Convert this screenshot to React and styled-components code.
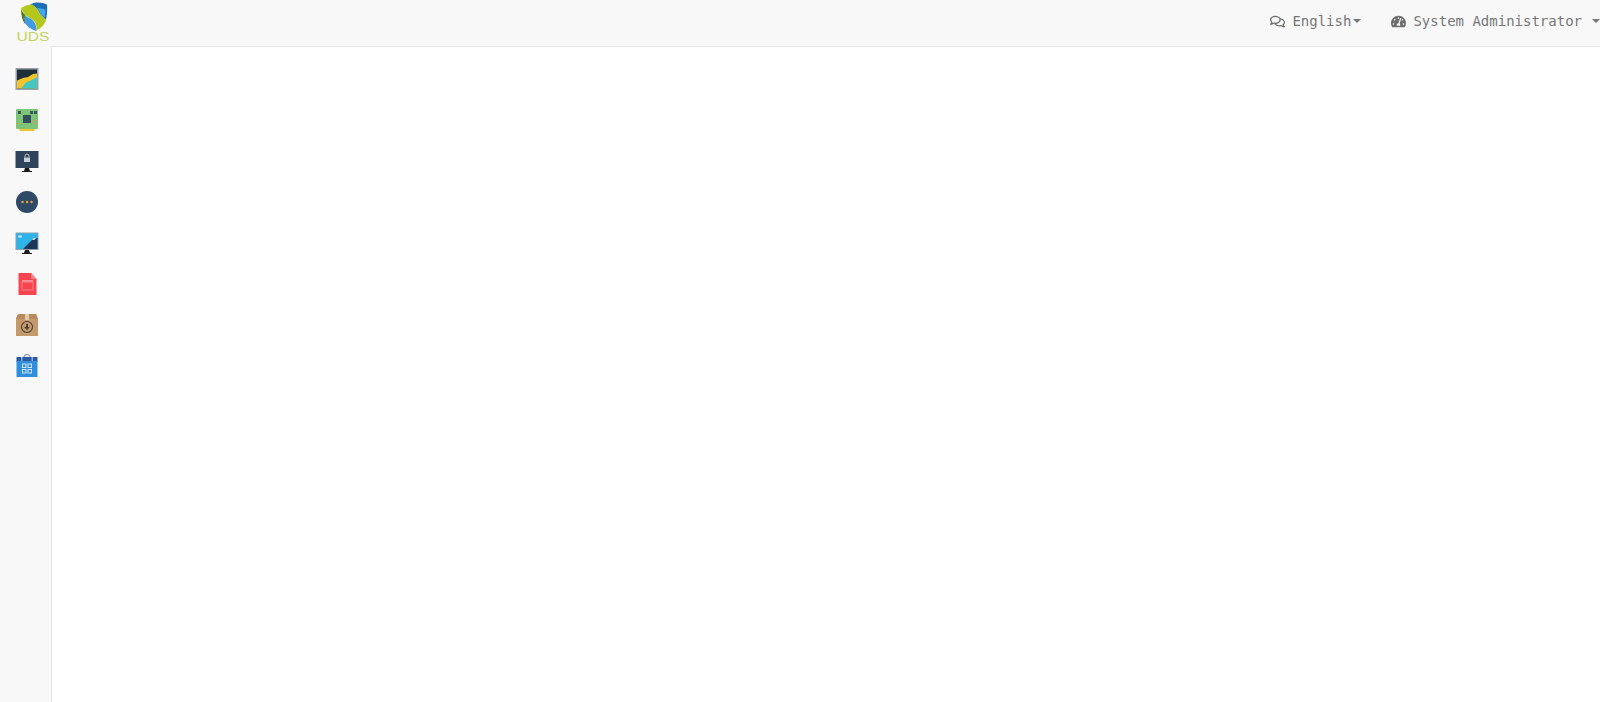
import React from "react";
import styled, { createGlobalStyle } from "styled-components";
import { FaRegComments, FaTachometerAlt } from "react-icons/fa";

const Global = createGlobalStyle`
  html, body { margin: 0; padding: 0; height: 100%; background: #fff; }
  #root { height: 100%; }
`;

const Page = styled.div`
  height: 702px;
  display: flex;
  flex-direction: column;
  overflow: hidden;
  font-family: "DejaVu Sans Mono", monospace;
  background: #f8f8f8;
`;

const TopBar = styled.header`
  height: 46px;
  flex: none;
  display: flex;
  align-items: center;
  justify-content: space-between;
  box-sizing: border-box;
  background: #f8f8f8;
`;

const Brand = styled.a`
  display: block;
  width: 51px;
  height: 46px;
  flex: none;
`;

const Nav = styled.nav`
  display: flex;
  align-items: center;
  margin-top: -4px;
`;

const NavItem = styled.a`
  display: flex;
  align-items: center;
  color: #777;
  font-size: 14px;
  line-height: 20px;
  margin-left: ${(p) => p.$gap}px;
  svg { color: #6f6f6f; font-size: 15px; margin-right: 7px; }
`;

const Caret = styled.span`
  display: inline-block;
  width: 0;
  height: 0;
  margin-left: ${(p) => p.$gap}px;
  border-top: 4px solid #777;
  border-left: 4px solid transparent;
  border-right: 4px solid transparent;
`;

const Body = styled.div`
  flex: 1;
  display: flex;
  min-height: 0;
`;

const Sidebar = styled.aside`
  width: 51px;
  flex: none;
  display: flex;
  flex-direction: column;
  align-items: center;
  gap: 17px;
  padding: 21px 0 0 3px;
  box-sizing: border-box;
`;

const MenuIcon = styled.a`
  display: block;
  width: 24px;
  height: 24px;
  svg { display: block; width: 24px; height: 24px; }
`;

const Main = styled.main`
  flex: 1;
  background: #fff;
  border-left: 1px solid #e7e7e7;
  border-top: 1px solid #e7e7e7;
`;

const Logo = () => (
  <svg width="51" height="46" viewBox="0 0 51 46">
    <path d="M30 4.5 C35 1.5 42 2 47 4.5 C47.5 10 47 15 46 20 L40 14 C38 9 35 6 30 4.5 Z" fill="#1b6fb0" />
    <path d="M36.5 7.5 L45.5 9.5 L45 17.5 L40.5 14 C39.5 11 38.5 9.5 36.5 7.5 Z" fill="#45a4ea" />
    <path d="M21 8 C25 5.5 29 4.5 32 4.5 C36 6.5 38 10 40 14 C42 16 44.5 18 46 20 C44.5 25 41 28 36 31 C37.5 27 36 22.5 33 20 C29 18 23 14 21 8 Z" fill="#b3c71c" />
    <path d="M21 9 C21 15 22 20 25 24 L25.5 15 C23.5 13.5 22 11.5 21 9 Z" fill="#5d7a1a" />
    <path d="M24.5 15 C27.5 17.5 31 18.5 33 20.5 C35.5 23 37 27 36 31 C31 29.5 27 26.5 24.5 22.5 Z" fill="#3f9ae0" />
    <text x="33" y="41" textAnchor="middle" fontFamily="Liberation Sans, sans-serif" fontSize="13" fill="#c5d35a" textLength="33" lengthAdjust="spacingAndGlyphs">UDS</text>
  </svg>
);

const Dashboard = () => (
  <svg viewBox="0 0 24 24">
    <rect x="0.5" y="1" width="23" height="22" fill="#98a1ab" />
    <rect x="2" y="2.5" width="20" height="19" fill="#1e2f38" />
    <path d="M2 13.5 L8 11 L13 10 L18 7 L22 6.5 V21.5 H2 Z" fill="#f3c32c" />
    <path d="M6 21.5 L11 15.5 L16 13.5 L22 10 V21.5 Z" fill="#45c8c0" />
  </svg>
);

const Board = () => (
  <svg viewBox="0 0 24 24">
    <path d="M4 21 H20 L19 23 H5 Z" fill="#f3c32c" />
    <rect x="1" y="1" width="22" height="20" rx="1" fill="#7cc576" />
    <rect x="3" y="3" width="3" height="3" fill="#3a5663" />
    <rect x="15" y="3" width="3" height="3" fill="#3a5663" />
    <rect x="19" y="3" width="3" height="3" fill="#3a5663" />
    <rect x="8" y="7" width="8" height="8" fill="#324d5c" />
    <rect x="18" y="12" width="4" height="1" fill="#d49a5c" />
    <rect x="18" y="15" width="4" height="1" fill="#d49a5c" />
    <rect x="2" y="15" width="3" height="1" fill="#d49a5c" />
  </svg>
);

const LockedMonitor = () => (
  <svg viewBox="0 0 24 24">
    <rect x="0.5" y="2" width="23" height="17" fill="#2f445a" />
    <path d="M10 19 H14 L15 22 H17 V23 H7 V22 H9 Z" fill="#1a1a1a" />
    <path d="M10 8.5 V7 A2 2 0 0 1 14 7 V8.5" fill="none" stroke="#b9c4cc" strokeWidth="1" />
    <rect x="9" y="8.5" width="6" height="4.5" fill="#c3ced6" />
  </svg>
);

const MoreCircle = () => (
  <svg viewBox="0 0 24 24">
    <circle cx="12" cy="12" r="11" fill="#2f4a66" />
    <circle cx="7.5" cy="12" r="1.2" fill="#e9a23b" />
    <circle cx="12" cy="12" r="1.2" fill="#e9a23b" />
    <circle cx="16.5" cy="12" r="1.2" fill="#e9a23b" />
  </svg>
);

const PictureMonitor = () => (
  <svg viewBox="0 0 24 24">
    <rect x="0.5" y="1.5" width="23" height="17.5" fill="#8aa0ad" />
    <rect x="1.5" y="2.5" width="21" height="15.5" fill="#2fb4ea" />
    <path d="M8 18 L16 10 L18 8 L22.5 7 V18 Z" fill="#1d3557" />
    <path d="M17 8.5 L19 7 L21 7.5 L19 9 Z" fill="#e6eef2" />
    <rect x="3" y="4.5" width="4" height="2" rx="1" fill="#c4ecfa" />
    <path d="M10 19 H14 L15 22 H17 V23 H7 V22 H9 Z" fill="#1a1a1a" />
  </svg>
);

const RedFile = () => (
  <svg viewBox="0 0 24 24">
    <path d="M3.5 1 H16 L21.5 7 V23 H3.5 Z" fill="#f6454f" />
    <path d="M16 1 L21.5 7 H16 Z" fill="#ee8087" />
    <rect x="7" y="10" width="11" height="8" fill="none" stroke="#f97f86" strokeWidth="1" />
    <rect x="7" y="8" width="11" height="2" fill="#f98f94" />
  </svg>
);

const Box = () => (
  <svg viewBox="0 0 24 24">
    <path d="M3 1 H21 L23 6 V23 H1 V6 Z" fill="#c49a6c" />
    <path d="M3 1 H21 L23 6 H1 Z" fill="#b88c5e" />
    <rect x="10" y="1" width="4" height="6" fill="#e0c8aa" />
    <circle cx="12" cy="14" r="5.5" fill="none" stroke="#4a4038" strokeWidth="1.1" />
    <path d="M11 11 H13 V14 H15 L12 17 L9 14 H11 Z" fill="#4a4038" />
  </svg>
);

const Calendar = () => (
  <svg viewBox="0 0 24 24">
    <path d="M9 3 A3 2.5 0 0 1 15 3" fill="none" stroke="#9aa3ad" strokeWidth="1.2" />
    <rect x="1.5" y="3" width="21" height="5" fill="#2a5aa5" />
    <rect x="1.5" y="7" width="21" height="16" fill="#2f8fdc" />
    <rect x="6" y="3" width="1.5" height="4" fill="#8fb0d8" />
    <rect x="16.5" y="3" width="1.5" height="4" fill="#8fb0d8" />
    <g fill="none" stroke="#cfe4f6" strokeWidth="1">
      <rect x="7.5" y="10" width="3.5" height="3.5" />
      <rect x="13" y="10" width="3.5" height="3.5" />
      <rect x="7.5" y="15.5" width="3.5" height="3.5" />
      <rect x="13" y="15.5" width="3.5" height="3.5" />
    </g>
  </svg>
);

const icons = [Dashboard, Board, LockedMonitor, MoreCircle, PictureMonitor, RedFile, Box, Calendar];

export default function App() {
  return (
    <Page>
      <Global />
      <TopBar>
        <Brand><Logo /></Brand>
        <Nav>
          <NavItem $gap={0}>
            <FaRegComments />English<Caret $gap={2} />
          </NavItem>
          <NavItem $gap={30}>
            <FaTachometerAlt />System Administrator<Caret $gap={10} />
          </NavItem>
        </Nav>
      </TopBar>
      <Body>
        <Sidebar>
          {icons.map((I, i) => (
            <MenuIcon key={i}><I /></MenuIcon>
          ))}
        </Sidebar>
        <Main />
      </Body>
    </Page>
  );
}
